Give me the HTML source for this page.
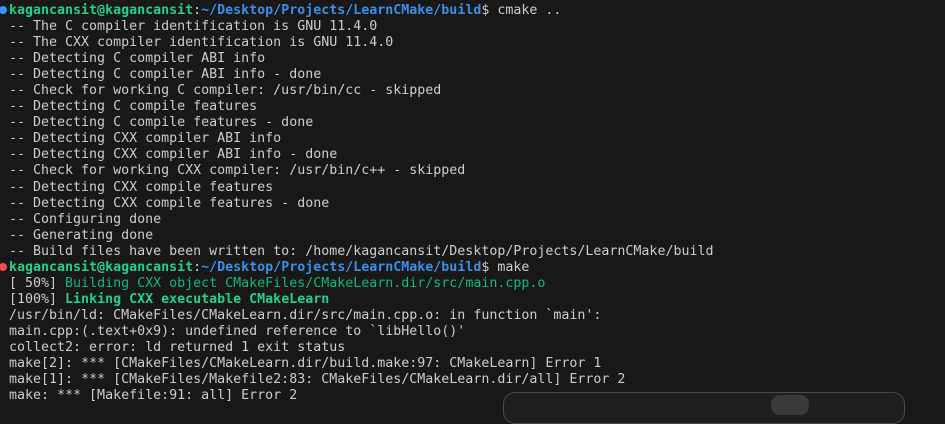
<!DOCTYPE html>
<html><head><style>
html,body{margin:0;padding:0;background:#181818;width:945px;height:403px;overflow:hidden}
pre{margin:0;position:absolute;left:9px;top:3px;font-family:"DejaVu Sans Mono","Liberation Mono",monospace;font-size:13.3px;line-height:16.04px;color:#cccccc;white-space:pre}
.u{color:#23d18b;font-weight:bold}.p{color:#3b8eea;font-weight:bold}
.g{color:#0dbc79}.gb{color:#23d18b;font-weight:bold}
.dot{position:absolute;left:-1px;width:8px;height:8px;border-radius:50%}
.box{position:absolute;left:503px;top:392px;width:400px;height:30px;border:1px solid #4a4a4a;border-radius:12px;background:#1f1f1f}
.pill{position:absolute;left:771px;top:395px;width:38px;height:20px;border-radius:9px;background:#3a3a3a}
</style></head><body>
<div class="dot" style="top:6px;background:#3794ff"></div>
<div class="dot" style="top:263px;background:#f14c4c"></div>
<pre><span class="u">kagancansit@kagancansit</span>:<span class="p">~/Desktop/Projects/LearnCMake/build</span>$ cmake ..
-- The C compiler identification is GNU 11.4.0
-- The CXX compiler identification is GNU 11.4.0
-- Detecting C compiler ABI info
-- Detecting C compiler ABI info - done
-- Check for working C compiler: /usr/bin/cc - skipped
-- Detecting C compile features
-- Detecting C compile features - done
-- Detecting CXX compiler ABI info
-- Detecting CXX compiler ABI info - done
-- Check for working CXX compiler: /usr/bin/c++ - skipped
-- Detecting CXX compile features
-- Detecting CXX compile features - done
-- Configuring done
-- Generating done
-- Build files have been written to: /home/kagancansit/Desktop/Projects/LearnCMake/build
<span class="u">kagancansit@kagancansit</span>:<span class="p">~/Desktop/Projects/LearnCMake/build</span>$ make
[ 50%] <span class="g">Building CXX object CMakeFiles/CMakeLearn.dir/src/main.cpp.o</span>
[100%] <span class="gb">Linking CXX executable CMakeLearn</span>
/usr/bin/ld: CMakeFiles/CMakeLearn.dir/src/main.cpp.o: in function `main':
main.cpp:(.text+0x9): undefined reference to `libHello()'
collect2: error: ld returned 1 exit status
make[2]: *** [CMakeFiles/CMakeLearn.dir/build.make:97: CMakeLearn] Error 1
make[1]: *** [CMakeFiles/Makefile2:83: CMakeFiles/CMakeLearn.dir/all] Error 2
make: *** [Makefile:91: all] Error 2</pre>
<div class="box"></div>
<div class="pill"></div>
</body></html>
